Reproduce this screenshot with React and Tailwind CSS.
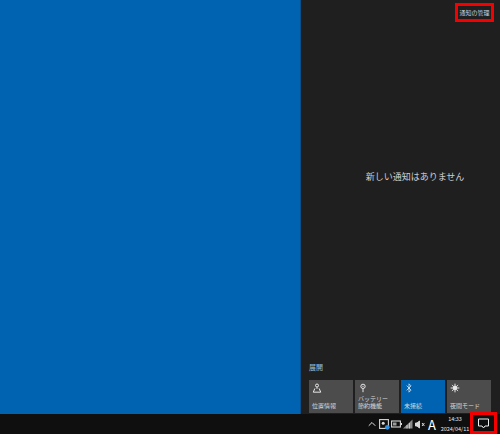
import React from 'react';
import { ChevronUp, Bluetooth } from 'lucide-react';

const FONT = "font-['Noto_Sans_CJK_JP','Noto_Sans',sans-serif]";

const LocationIcon = () => (
  <svg width="10" height="10" viewBox="0 0 12 12" fill="none" stroke="#e8e8e8" strokeWidth="1.2">
    <circle cx="6" cy="3" r="1.8" />
    <path d="M6 5v2M3.5 6.5 1.5 11h9L8.5 6.5" />
  </svg>
);

const BatteryIcon = () => (
  <svg width="10" height="10" viewBox="0 0 12 12" fill="none" stroke="#e8e8e8" strokeWidth="1.2">
    <circle cx="6" cy="4" r="2.6" />
    <path d="M6 7v4" />
    <circle cx="6" cy="4" r="0.8" fill="#e8e8e8" stroke="none" />
  </svg>
);

const NightIcon = () => (
  <svg width="10" height="10" viewBox="0 0 12 12" fill="#e8e8e8" stroke="#e8e8e8" strokeWidth="1.2">
    <circle cx="6" cy="6" r="2.6" />
    <path d="M6 .8v1.6M6 9.6v1.6M.8 6h1.6M9.6 6h1.6M2.3 2.3l1.1 1.1M8.6 8.6l1.1 1.1M2.3 9.7l1.1-1.1M8.6 3.4l1.1-1.1" />
  </svg>
);

const Tile = ({ icon, label, active }) => (
  <div className={`flex h-[33px] w-[44px] flex-col justify-between pt-[3px] pb-[4px] pl-[3px] ${active ? 'bg-[#0063b1]' : 'bg-[#4c4c4c]'}`}>
    <div className="h-[10px]">{icon}</div>
    <div className="text-[6px] leading-[7px] text-[#d8d8d8] whitespace-pre-line">{label}</div>
  </div>
);

const TrayCell = ({ children }) => (
  <div className="flex w-[12px] items-center justify-center">{children}</div>
);

const TrayIcons = () => (
  <div className="flex items-center text-[#e0e0e0]">
    <TrayCell><ChevronUp size={12} strokeWidth={2} /></TrayCell>
    <TrayCell>
      <svg width="11" height="11" viewBox="0 0 11 11" fill="none">
        <rect x="0.6" y="0.6" width="8.8" height="8.8" stroke="#d8d8d8" strokeWidth="1.1" />
        <circle cx="4.2" cy="4.2" r="1.5" fill="#d8d8d8" />
        <circle cx="8.3" cy="8.3" r="2.4" fill="#2f8fe0" />
      </svg>
    </TrayCell>
    <TrayCell>
      <svg width="11" height="8" viewBox="0 0 11 8" fill="none">
        <rect x="0.6" y="1" width="8.8" height="6" stroke="#d8d8d8" strokeWidth="1.1" />
        <rect x="2" y="2.5" width="3.5" height="3" fill="#9a9a9a" />
        <rect x="10" y="3" width="1" height="2" fill="#d8d8d8" />
      </svg>
    </TrayCell>
    <TrayCell>
      <svg width="10" height="10" viewBox="0 0 10 10" fill="#8a8a8a">
        <path d="M0 9.5 9.5 .5v9z" />
        <path d="M4 9.5V6M6.5 9.5V4" stroke="#d8d8d8" strokeWidth="0.8" />
      </svg>
    </TrayCell>
    <TrayCell>
      <svg width="11" height="9" viewBox="0 0 11 9" fill="#d8d8d8" stroke="#d8d8d8" strokeWidth="1">
        <path d="M0.5 3h1.5L4.5 1v7L2 6H.5z" />
        <path d="M7 3l2.4 3M9.4 3 7 6" fill="none" />
      </svg>
    </TrayCell>
    <TrayCell>
      <span className="text-[13px] leading-none text-white">A</span>
    </TrayCell>
  </div>
);

export default function App() {
  return (
    <div className={`flex h-[434px] w-[500px] flex-col overflow-hidden bg-[#0063b1] ${FONT}`}>
      <div className="flex min-h-0 flex-1">
        <div className="w-[300px] bg-[#0063b1]" />

        {/* Action center */}
        <div className="flex w-[200px] flex-col border-l border-[#0a4f8a] bg-[#1f1f1f] pr-[9px] pl-[8px]">
          <div className="flex justify-end pt-[3px] -mr-[3px]">
            <div className="flex h-[19px] w-[39px] items-center justify-center border-[3px] border-[#f50000] text-[6px] whitespace-nowrap text-[#c8d4e0]">
              通知の管理
            </div>
          </div>

          <div className="mt-[130px] pl-[30px] text-center text-[9px] leading-[50px] text-[#cfcfcf]">
            新しい通知はありません
          </div>

          <div className="mt-auto mb-[9px] text-[7px] leading-[8px] text-[#8fc4ea]">展開</div>

          <div className="flex gap-[2px]">
            <Tile icon={<LocationIcon />} label="位置情報" />
            <Tile icon={<BatteryIcon />} label={'バッテリー\n節約機能'} />
            <Tile icon={<Bluetooth size={10} color="#fff" strokeWidth={1.6} />} label="未接続" active />
            <Tile icon={<NightIcon />} label="夜間モード" />
          </div>
          <div className="h-[1px]" />
        </div>
      </div>

      {/* Taskbar */}
      <div className="flex h-[20px] items-center justify-end bg-[#0f0f0f] text-white">
        <TrayIcons />
        <div className="ml-[2px] w-[30px] text-center text-[5.5px] leading-[10px] whitespace-nowrap text-[#e6e6e6]">
          <div>14:33</div>
          <div>2024/04/11</div>
        </div>
        <div className="relative h-[20px] w-[30px]">
          <div className="absolute right-[3px] bottom-0 flex h-[22px] w-[27px] items-center justify-center border-[3px] border-[#f50000]">
            <svg width="11" height="11" viewBox="0 0 11 11" fill="none" stroke="#eeeeee" strokeWidth="1">
              <path d="M.5 1h10v7H7L5.5 10 4 8H.5z" />
            </svg>
          </div>
        </div>
      </div>
    </div>
  );
}
